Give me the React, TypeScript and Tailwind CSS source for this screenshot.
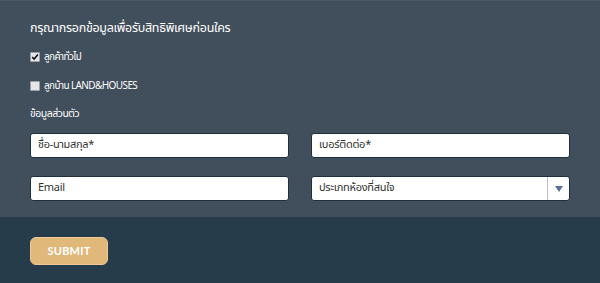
const thai = { fontFamily: '"Noto Sans Thai", "Noto Sans", "Liberation Sans", sans-serif' };

function Check({ checked, label }: { checked?: boolean; label: string }) {
    return (
        <label className="flex items-center gap-[4px] text-[10px] leading-none text-white">
            <span className="flex h-[10px] w-[10px] items-center justify-center rounded-[1px] border border-[#9aa1a8] bg-[#e6e6e6]">
                {checked && (
                    <svg viewBox="0 0 10 10" className="h-[8px] w-[8px]">
                        <path d="M1.5 5.2 L4 7.6 L8.6 2" fill="none" stroke="#111" strokeWidth="2" />
                    </svg>
                )}
            </span>
            <span className="tracking-[-0.6px]">{label}</span>
        </label>
    );
}

function Field({ placeholder }: { placeholder: string }) {
    return (
        <div className="flex h-[25px] items-center rounded-[3px] border border-[#1e3040] bg-white px-[7px] text-[11px] tracking-[-0.3px] text-[#333]">
            {placeholder}
        </div>
    );
}

export default function App() {
    return (
        <div className="flex h-[283px] w-[600px] flex-col" style={thai}>
            {/* form area */}
            <div className="flex h-[217px] flex-col border-t border-[#4a5764] bg-[#414e5b] px-[30px] pt-[19px]">
                <div className="text-[12.5px] leading-[18px] text-white tracking-[-0.3px]">
                    กรุณากรอกข้อมูลเพื่อรับสิทธิพิเศษก่อนใคร
                </div>
                <div className="mt-[14px]">
                    <Check checked label="ลูกค้าทั่วไป" />
                </div>
                <div className="mt-[19px]">
                    <Check label="ลูกบ้าน LAND&HOUSES" />
                </div>
                <div className="mt-[16px] text-[10.5px] leading-[14px] text-white tracking-[-0.5px]">ข้อมูลส่วนตัว</div>

                <div className="mt-[12px] grid grid-cols-2 gap-x-[22px] gap-y-[18px]">
                    <Field placeholder="ชื่อ-นามสกุล*" />
                    <Field placeholder="เบอร์ติดต่อ*" />
                    <Field placeholder="Email" />
                    <div className="flex h-[25px] items-center rounded-[3px] border border-[#1e3040] bg-white text-[11px] tracking-[-0.3px] text-[#333]">
                        <span className="flex-1 px-[7px]">ประเภทห้องที่สนใจ</span>
                        <span className="flex h-full w-[22px] items-center justify-center border-l border-[#b8c0d0]">
                            <svg viewBox="0 0 8 6" className="h-[6px] w-[8px]">
                                <path d="M0 0 H8 L4 6 Z" fill="#5d6f96" />
                            </svg>
                        </span>
                    </div>
                </div>
            </div>

            {/* footer */}
            <div className="flex flex-1 items-start bg-[#273c4b] px-[30px] pt-[20px]">
                <button
                    className="h-[28px] w-[78px] rounded-[6px] border border-[#ecc996] bg-[#e0b87a] text-[11px] font-bold tracking-[0.2px] text-white"
                    style={{ fontFamily: '"Lato", "Open Sans", sans-serif' }}
                >
                    SUBMIT
                </button>
            </div>
        </div>
    );
}
